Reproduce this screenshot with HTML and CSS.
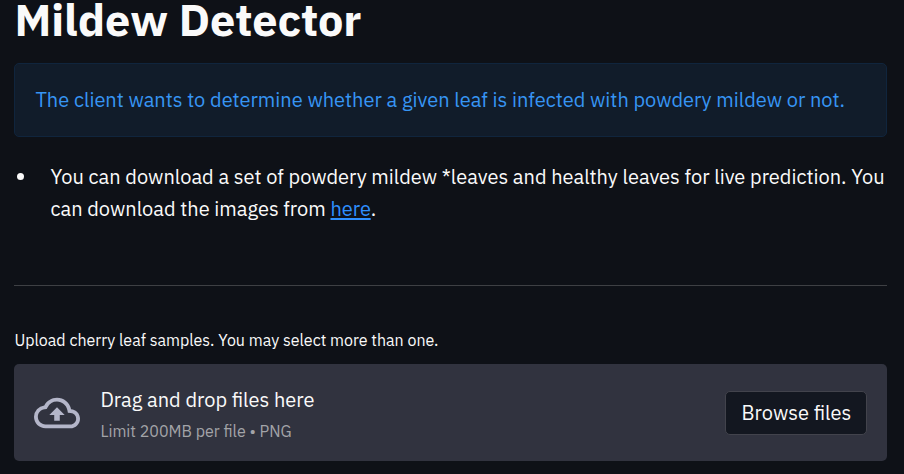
FILE: index.html
```html
<!DOCTYPE html>
<html lang="en">
<head>
<meta charset="utf-8">
<title>Mildew Detector</title>
<link rel="stylesheet" href="styles.css">
</head>
<body>
<main class="page">
  <h1 class="title">Mildew Detector</h1>
  <div class="alert"><p class="alert-text">The client wants to determine whether a given leaf is infected with powdery mildew or not.</p></div>
  <ul class="notes">
    <li>You can download a set of powdery mildew *leaves and healthy leaves for live prediction. You<br>can download the images from <a class="link" href="#">here</a>.</li>
  </ul>
  <hr class="divider">
  <label class="upload-label" for="browse">Upload cherry leaf samples. You may select more than one.</label>
  <section class="dropzone">
    <svg class="cloud" viewBox="0 0 24 24" aria-hidden="true"><path d="M19.35 10.04A7.49 7.49 0 0012 4C9.11 4 6.6 5.64 5.35 8.04A5.994 5.994 0 000 14c0 3.31 2.69 6 6 6h13c2.76 0 5-2.24 5-5 0-2.64-2.05-4.78-4.65-4.96zM19 18H6c-2.21 0-4-1.79-4-4 0-2.05 1.53-3.76 3.56-3.97l1.07-.11.5-.95A5.469 5.469 0 0112 6c2.62 0 4.88 1.86 5.39 4.43l.3 1.5 1.53.11A2.98 2.98 0 0122 15c0 1.65-1.35 3-3 3zM8 13h2.55v3h2.9v-3H16l-4-4z"/></svg>
    <div class="instructions">
      <span class="drag">Drag and drop files here</span>
      <small class="limit">Limit 200MB per file • PNG</small>
    </div>
    <button class="browse" id="browse" type="button">Browse files</button>
  </section>
</main>
</body>
</html>
```
FILE: styles.css
```css
* { box-sizing: border-box; }
body {
  margin: 0;
  height: 474px;
  overflow: hidden;
  background: #0e1117;
  color: #fafafa;
  font: 400 20px/32px "IBM Plex Sans", Roboto, sans-serif;
}
.page { padding: 0 16.6px 0 14.4px; }
.title {
  margin: 0;
  height: 63px;
  font-size: 45px;
  line-height: 38px;
  font-weight: 700;
}
.alert {
  height: 74px;
  padding: 20px;
  border: 1px solid #10253d;
  border-radius: 5px;
  background: #111c2a;
  color: #3795f4;
}
.alert-text { margin: 0; white-space: nowrap; }
.notes {
  margin: 24px 0 0;
  padding: 0 0 0 24px;
  white-space: nowrap;
}
.notes li { padding-left: 12px; }
.link { color: #2e8fff; text-decoration-thickness: 2px; text-underline-offset: 2px; }
.divider {
  height: 1px;
  margin: 60px 0 44px;
  border: 0;
  background: #3e4044;
}
.upload-label {
  display: block;
  height: 34px;
  font-size: 16px;
  line-height: 20px;
}
.dropzone {
  display: flex;
  align-items: center;
  height: 97px;
  padding: 0 20px;
  border-radius: 5px;
  background: #31333f;
}
.cloud { width: 46px; height: 46px; margin-right: 20px; fill: #b4b6c9; flex: none; }
.instructions { display: flex; flex-direction: column; flex: 1; padding-top: 5px; }
.limit { font-size: 16px; line-height: 31px; color: #a3a4a8; }
.browse {
  width: 142px;
  height: 44px;
  padding: 0;
  border: 1px solid #42434c;
  border-radius: 5px;
  background: #131720;
  color: #fafafa;
  font: inherit;
  white-space: nowrap;
}
```
